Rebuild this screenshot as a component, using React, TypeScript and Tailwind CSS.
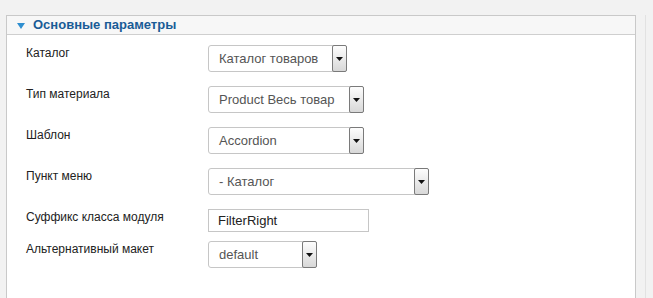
import React from "react";

type Row = {
  label: string;
  kind: "select" | "input";
  value: string;
  width: string;
  rowClass: string;
};

const rows: Row[] = [
  { label: "Каталог", kind: "select", value: "Каталог товаров", width: "w-[139px]", rowClass: "mt-[10px]" },
  { label: "Тип материала", kind: "select", value: "Product Весь товар", width: "w-[156px]", rowClass: "mt-[14px]" },
  { label: "Шаблон", kind: "select", value: "Accordion", width: "w-[156px]", rowClass: "mt-[14px]" },
  { label: "Пункт меню", kind: "select", value: "- Каталог", width: "w-[221px]", rowClass: "mt-[14px]" },
  { label: "Суффикс класса модуля", kind: "input", value: "FilterRight", width: "w-[161px]", rowClass: "mt-[14px]" },
  { label: "Альтернативный макет", kind: "select", value: "default", width: "w-[109px]", rowClass: "mt-[9px]" },
];

// fake select box, drawn like the old Joomla admin select
const FakeSelect = ({ value, width }: { value: string; width: string }) => (
  <div className={`${width} h-[27px] flex items-stretch border border-[#c6c6c6] rounded-[3px] bg-white`}>
    <div className="flex-1 flex items-center pl-[10px] text-[13px] text-[#555] whitespace-nowrap overflow-hidden">
      {value}
    </div>
    <div className="w-[15px] -my-px -mr-px flex items-center justify-center border border-[#7a7a7a] rounded-[2px] bg-gradient-to-b from-[#fdfdfd] to-[#d8d8d8]">
      <svg width="7" height="4" viewBox="0 0 7 4">
        <path d="M0 0h7L3.5 4z" fill="#111" />
      </svg>
    </div>
  </div>
);

export default function App() {
  return (
    <div
      className="w-[653px] h-[298px] overflow-hidden bg-[#f2f2f2] pt-[15px] pl-[6px]"
      style={{ fontFamily: '"Liberation Sans", Arial, sans-serif' }}
    >
      <div className="w-[640px] h-[400px] border-r border-[#e2e2e2]">
        <div className="w-[630px] h-[400px] border border-[#c9c9c9] bg-white">
          <div className="h-[19px] flex items-center bg-[#f7f7f7] border-b border-[#cfcfcf] pl-[10px]">
            <svg width="8" height="6" viewBox="0 0 8 6" className="mt-[2px]">
              <path d="M0 0h8L4 6z" fill="#2f8fd0" />
            </svg>
            <span className="ml-[8px] text-[13px] font-bold text-[#1a5c96]">Основные параметры</span>
          </div>
          <div className="pl-[19px]">
            {rows.map((r) => (
              <div key={r.label} className={`flex items-start ${r.rowClass}`}>
                <div className="w-[182px] pt-[1px] leading-[14px] text-[12px] text-[#222] whitespace-nowrap">{r.label}</div>
                {r.kind === "select" ? (
                  <FakeSelect value={r.value} width={r.width} />
                ) : (
                  <div className={`${r.width} h-[23px] flex items-center border border-[#c6c6c6] bg-white pl-[9px] text-[13px] text-[#222]`}>
                    {r.value}
                  </div>
                )}
              </div>
            ))}
          </div>
        </div>
      </div>
    </div>
  );
}
